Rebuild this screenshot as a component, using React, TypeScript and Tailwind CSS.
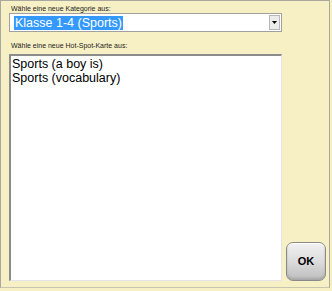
export default function App() {
  const items = ["Sports (a boy is)", "Sports (vocabulary)"];
  return (
    <div className="w-[332px] h-[291px] bg-[#f8f0c5] pr-[2px] pb-[3px] font-['Liberation_Sans',Arial,sans-serif] text-black">
      <div className="w-full h-full border border-[#a8a8a0] border-b-[#c8c4b0] flex items-start pl-[8px]">
        <div className="w-[273px] flex flex-col">
          <p className="mt-[3px] h-[9px] text-[7px] leading-[9px] pl-[2px] text-[#222]">
            Wähle eine neue Kategorie aus:
          </p>
          <div className="h-[19px] bg-white border border-[#a0a0a0] flex items-stretch">
            <div className="flex-1 flex items-center pl-[4px]">
              <span className="bg-[#3399ff] text-white text-[12.5px] leading-[14px] px-[1px]">
                Klasse 1-4 (Sports)
              </span>
            </div>
            <div className="w-[11px] m-[1px] bg-[#ececec] border border-[#b8b8b8] flex items-center justify-center">
              <svg width="5" height="3" viewBox="0 0 5 3">
                <path d="M0 0H5L2.5 3Z" fill="#000" />
              </svg>
            </div>
          </div>
          <p className="mt-[9px] h-[9px] text-[7px] leading-[9px] pl-[2px] text-[#222]">
            Wähle eine neue Hot-Spot-Karte aus:
          </p>
          <div className="mt-[4px] h-[227px] bg-white border-t-2 border-l-2 border-t-[#8c8c8c] border-l-[#8c8c8c] border-r border-b border-r-[#e4e4ec] border-b-[#e4e4ec] pl-[1px] pt-[1px]">
            {items.map((item) => (
              <div key={item} className="text-[12.5px] leading-[14px]">
                {item}
              </div>
            ))}
          </div>
        </div>
        <button className="self-end ml-[4px] mb-[6px] w-[40px] h-[39px] rounded-[7px] border border-[#8a8a8a] bg-gradient-to-b from-[#f2f2f2] via-[#dcdcdc] to-[#bdbdbd] shadow-[inset_0_1px_0_#ffffff,inset_0_-2px_2px_#a8a8a8] flex items-center justify-center">
          <span className="text-[11px] font-bold leading-none">OK</span>
        </button>
      </div>
    </div>
  );
}
